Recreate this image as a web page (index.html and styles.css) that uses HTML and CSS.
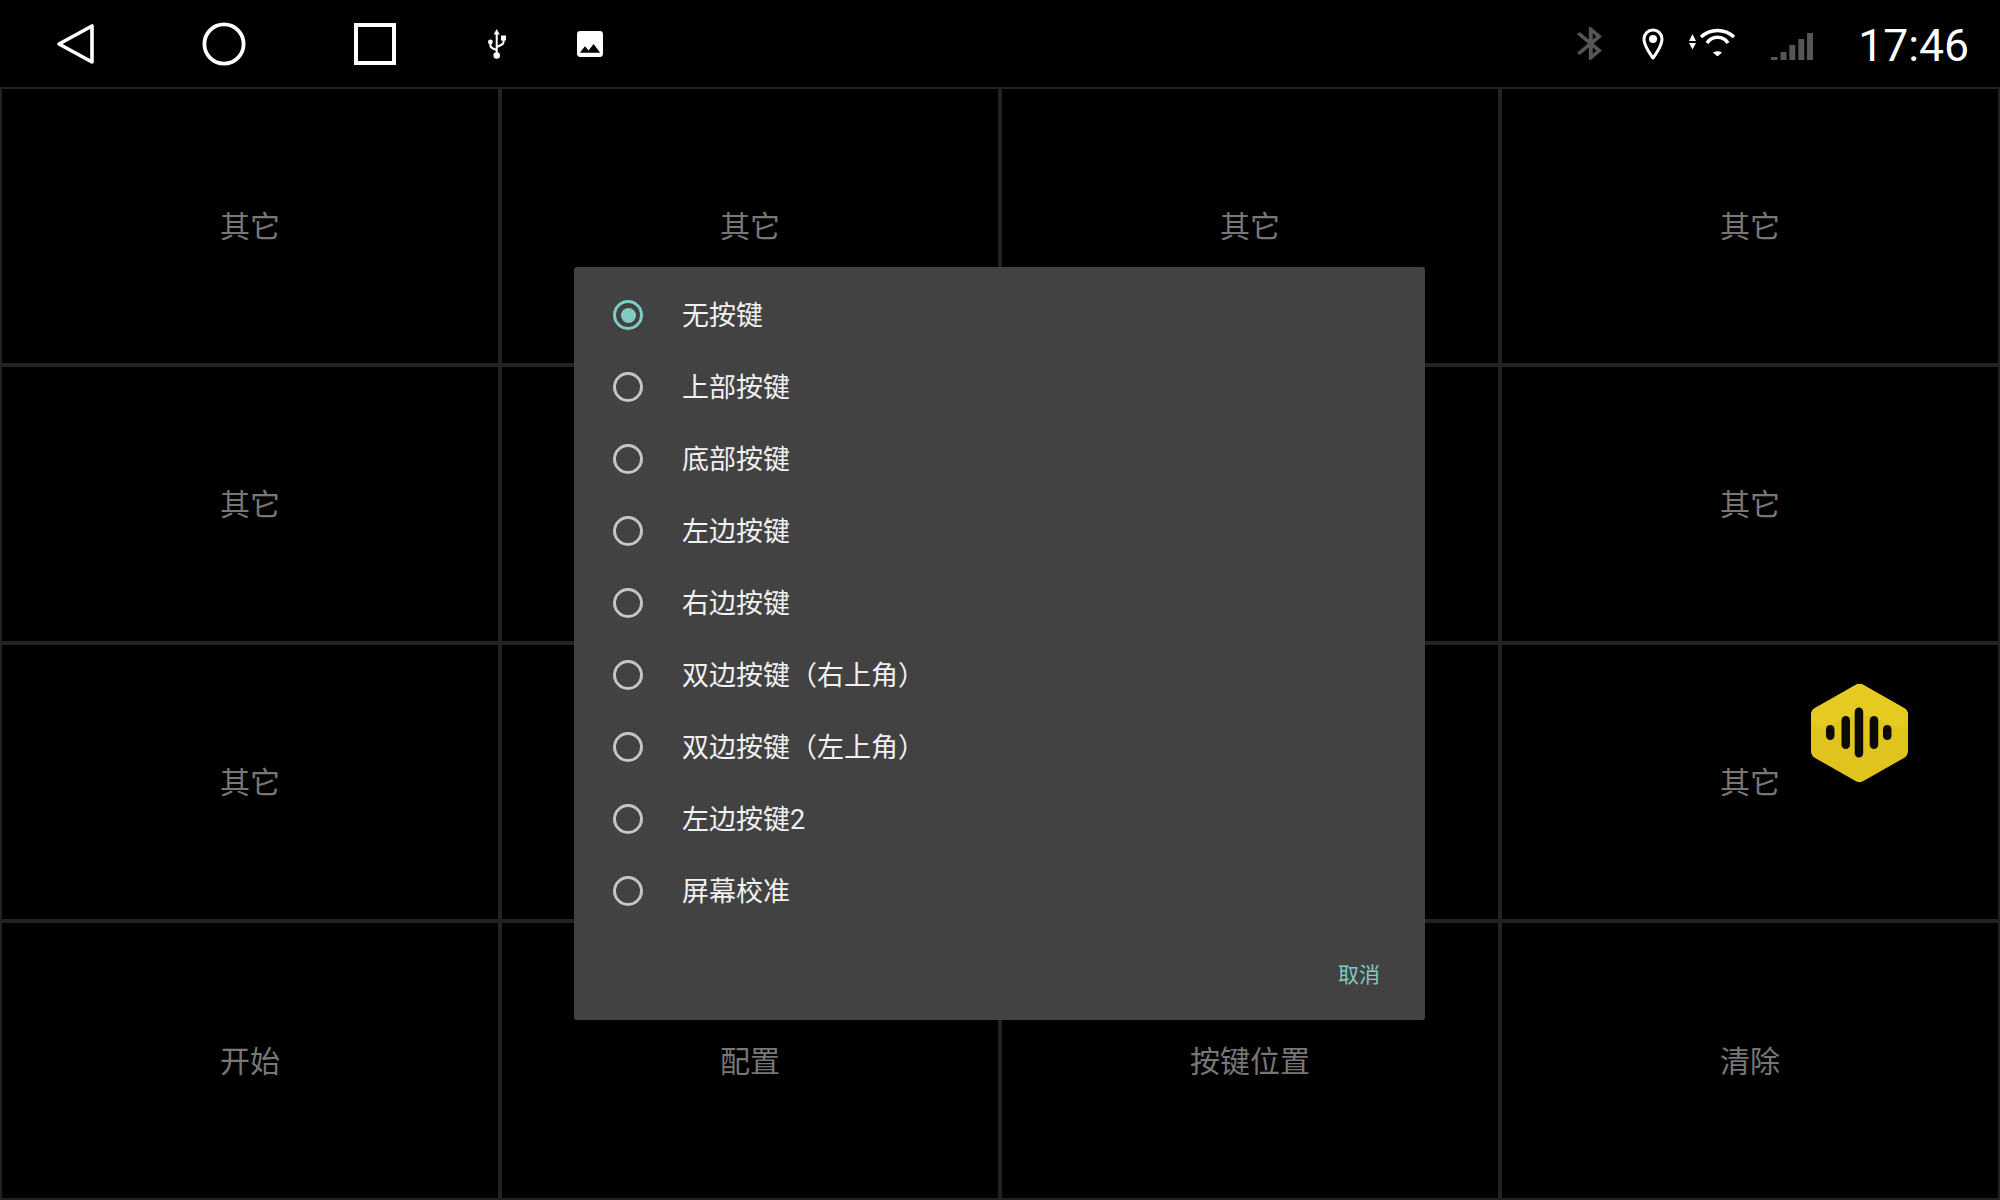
FILE: index.html
```html
<!DOCTYPE html>
<html>
<head>
<meta charset="utf-8">
<title>按键学习</title>
<link rel="stylesheet" href="styles.css">
</head>
<body>
<div id="wrap">
  <div class="status_bar">
    <div class="nav_icons">
      <svg class="ic_back" width="38" height="42" viewBox="0 0 38 42"><path d="M36 3V39L3 21Z" fill="none" stroke="#fff" stroke-width="3.6" stroke-linejoin="round"/></svg>
      <svg class="ic_home" width="44" height="44" viewBox="0 0 44 44"><circle cx="22" cy="22" r="19.6" fill="none" stroke="#fff" stroke-width="3.8"/></svg>
      <svg class="ic_recent" width="42" height="42" viewBox="0 0 42 42"><rect x="2" y="2" width="38" height="38" fill="none" stroke="#fff" stroke-width="4"/></svg>
      <svg class="ic_usb" width="18" height="30" viewBox="0 0 18 30">
        <path d="M8.700 0L11.700 5.500H5.700Z" fill="#fff"/>
        <path d="M8.700 4V26M2.400 13V16Q2.400 18.500 5 19.500L8.700 21M15.600 9V12.500Q15.600 15 13 16L8.700 18" fill="none" stroke="#fff" stroke-width="2"/>
        <circle cx="8.700" cy="26.500" r="3.300" fill="#fff"/>
        <circle cx="2.400" cy="13" r="2.400" fill="#fff"/>
        <rect x="13" y="6.500" width="5" height="5" fill="#fff"/>
      </svg>
      <svg class="ic_image" width="26" height="26" viewBox="3 3 18 18"><path d="M21 19V5c0-1.100-.9-2-2-2H5c-1.100 0-2 .9-2 2v14c0 1.100.9 2 2 2h14c1.100 0 2-.9 2-2zM8.500 13.500l2.500 3.010L14.500 12l4.500 6H5l3.500-4.500z" fill="#fff"/></svg>
    </div>
    <div class="sys_icons">
      <svg class="ic_bt" width="25" height="33" viewBox="5 2 12.710 20" preserveAspectRatio="none"><path d="M17.710 7.710L12 2h-1v7.590L6.410 5 5 6.410 10.590 12 5 17.590 6.410 19 11 14.410V22h1l5.710-5.710-4.300-4.290 4.300-4.290zM13 5.830l1.880 1.880L13 9.590V5.830zm1.880 10.460L13 18.170v-3.760l1.880 1.880z" fill="#555"/></svg>
      <svg class="ic_loc" width="22" height="32" viewBox="0 0 22 32"><path d="M11 30C11 30 2 18.500 2 11a9 9 0 0 1 18 0C20 18.500 11 30 11 30Z" fill="none" stroke="#fff" stroke-width="3" stroke-linejoin="round"/><circle cx="11" cy="11" r="4" fill="#fff"/></svg>
      <svg class="ic_wifi" width="47" height="29" viewBox="0 0 47 29">
        <path d="M3.500 7L7 14H0ZM3.500 22.500L0 16H7Z" fill="#fff"/>
        <path d="M12 10A24 24 0 0 1 45 10M18 16A12.500 12.500 0 0 1 39 16" fill="none" stroke="#fff" stroke-width="3.600"/>
        <path d="M24 25.500Q28.500 23 33 25.500L28.500 29.500Z" fill="#fff"/>
      </svg>
      <svg class="ic_signal" width="42" height="27" viewBox="0 0 42 27" fill="#555">
        <rect x="0" y="24" width="6.500" height="3"/>
        <rect x="9.500" y="19" width="6" height="8"/>
        <rect x="18.300" y="12" width="6" height="15"/>
        <rect x="27.300" y="6" width="6" height="21"/>
        <rect x="36" y="0" width="6" height="27"/>
      </svg>
      <span class="clock">17:46</span>
    </div>
  </div>

  <div class="key_grid">
    <div class="key"><span>其它</span></div>
    <div class="key"><span>其它</span></div>
    <div class="key"><span>其它</span></div>
    <div class="key"><span>其它</span></div>
    <div class="key"><span>其它</span></div>
    <div class="key"></div>
    <div class="key"></div>
    <div class="key"><span>其它</span></div>
    <div class="key"><span>其它</span></div>
    <div class="key"></div>
    <div class="key"></div>
    <div class="key"><span>其它</span></div>
    <div class="key"><span>开始</span></div>
    <div class="key"><span>配置</span></div>
    <div class="key"><span>按键位置</span></div>
    <div class="key"><span>清除</span></div>
  </div>

  <div class="dialog">
    <ul class="option_list">
      <li class="option checked"><i class="radio"></i><span>无按键</span></li>
      <li class="option"><i class="radio"></i><span>上部按键</span></li>
      <li class="option"><i class="radio"></i><span>底部按键</span></li>
      <li class="option"><i class="radio"></i><span>左边按键</span></li>
      <li class="option"><i class="radio"></i><span>右边按键</span></li>
      <li class="option"><i class="radio"></i><span>双边按键（右上角）</span></li>
      <li class="option"><i class="radio"></i><span>双边按键（左上角）</span></li>
      <li class="option"><i class="radio"></i><span>左边按键2</span></li>
      <li class="option"><i class="radio"></i><span>屏幕校准</span></li>
    </ul>
    <div class="dialog_foot"><span class="btn_cancel">取消</span></div>
  </div>

  <svg class="voice_ball" width="97" height="98" viewBox="0 0 97 98">
    <path d="M48.500 8L89 31V67L48.500 90L8 67V31Z" fill="#e0c31d" stroke="#e0c31d" stroke-width="16" stroke-linejoin="round"/>
    <path d="M48.500 8L89 31V36L48.500 20L8 36V31Z" fill="#e5ca21" stroke="#e5ca21" stroke-width="16" stroke-linejoin="round"/>
    <g fill="#0a0a0a">
      <rect x="15" y="41" width="8.500" height="15" rx="4.250"/>
      <rect x="30.500" y="32" width="8.500" height="33" rx="4.250"/>
      <rect x="43.700" y="23.500" width="8.500" height="50" rx="4.250"/>
      <rect x="58.700" y="32" width="8.500" height="33" rx="4.250"/>
      <rect x="72" y="41" width="8.500" height="15" rx="4.250"/>
    </g>
  </svg>
</div>
</body>
</html>
```

FILE: styles.css
```css
* {margin:0;padding:0;box-sizing:border-box}
ul,li {list-style:none}
body {background:#000;font-family:"Roboto","Noto Sans CJK SC",sans-serif}

#wrap {width:2000px;height:1200px;position:relative;overflow:hidden;background:#000}

.status_bar {height:87px;display:flex;justify-content:space-between;align-items:center;padding:0 31px 0 56px}
.nav_icons,.sys_icons {display:flex;align-items:center}
.ic_home {margin-left:108px}
.ic_recent {margin-left:108px}
.ic_usb {margin-left:92px}
.ic_image {margin-left:71px}
.ic_loc {margin-left:40px}
.ic_wifi {margin-left:25px;margin-bottom:4px}
.ic_signal {margin-left:35px;margin-top:6px}
.clock {margin-left:45px;color:#fff;font-size:44.500px;line-height:52px;margin-top:4px}

.key_grid {height:1113px;display:grid;grid-template-columns:repeat(4,500px);grid-template-rows:278px 278px 278px 1fr}
.key {border:2px solid #222;display:flex;align-items:center;justify-content:center;color:#777;font-size:30px}
.key span {margin-bottom:4px}

.dialog {position:absolute;left:574px;top:267px;width:851px;height:753px;background:#424242;border-radius:3px;padding-top:12px;display:flex;flex-direction:column}
.option {height:72px;display:flex;align-items:center;padding-left:39px;color:#f2f2f2;font-size:27px}
.option span {margin-bottom:3px}
.radio {width:30px;height:30px;border:3px solid #c4c4c4;border-radius:50%;margin-right:39px;flex:none;display:flex;align-items:center;justify-content:center}
.checked .radio {border-color:#80cbc4}
.checked .radio:after {content:"";width:15px;height:15px;border-radius:50%;background:#80cbc4}
.dialog_foot {display:flex;justify-content:flex-end;padding:32px 45px 0 0}
.btn_cancel {color:#80cbc4;font-size:21px;line-height:32px}

.voice_ball {position:absolute;left:1811px;top:684px}
```
